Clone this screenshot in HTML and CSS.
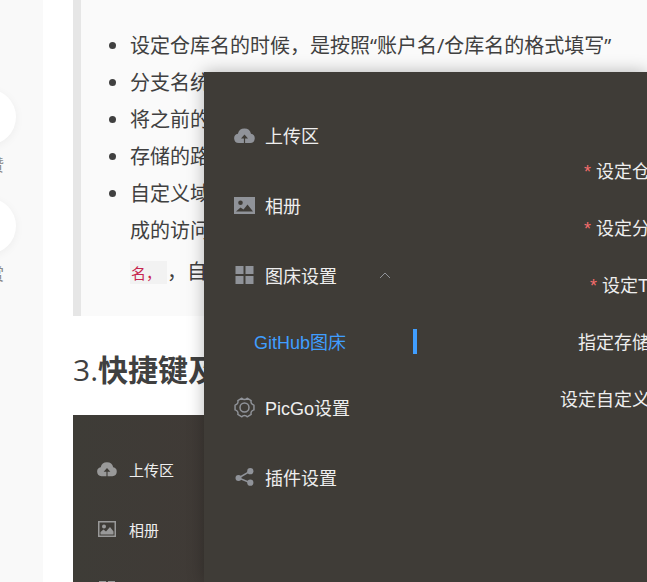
FILE: index.html
```html
<!DOCTYPE html>
<html lang="zh-CN">
<head>
<meta charset="utf-8">
<meta name="viewport" content="width=device-width, initial-scale=1">
<title>PicGo 图床设置</title>
<link rel="stylesheet" href="styles.css">
</head>
<body>
<svg class="sprite" aria-hidden="true">
  <symbol id="cloud" viewBox="0 0 21 16">
    <path fill="currentColor" fill-rule="evenodd" d="M4.7 15.5A4.7 4.7 0 0 1 3.9 6.2 6.7 6.7 0 0 1 17 6.200 4.700 4.700 0 0 1 16.200 15.500H11.100V11H14L10.500 7 7 11H9.900V15.500Z"/>
  </symbol>
  <symbol id="photo" viewBox="0 0 21 17">
    <path fill="currentColor" fill-rule="evenodd" d="M0 0H21V17H0ZM2 14.500H19L13.500 7.500 9.500 12.500 6.500 10.500ZM6.500 3.500A2.300 2.300 0 1 0 6.500 8.100 2.300 2.300 0 1 0 6.500 3.500Z"/>
  </symbol>
  <symbol id="photo-frame" viewBox="0 0 18 16">
    <path fill="currentColor" fill-rule="evenodd" d="M0 0H18V16H0ZM1.500 1.500V14.500H16.500V1.500Z"/>
    <path fill="currentColor" d="M2.500 13.500V11L5.500 8.500 8 10.500 12 6 15.500 10.500V13.500Z"/>
    <circle cx="6" cy="5.500" r="2" fill="currentColor"/>
  </symbol>
  <symbol id="grid" viewBox="0 0 18 18">
    <path fill="currentColor" d="M0 0H8V8H0ZM10 0H18V8H10ZM0 10H8V18H0ZM10 10H18V18H10Z"/>
  </symbol>
  <symbol id="gear" viewBox="0 0 22 22">
    <path fill="none" stroke="currentColor" stroke-width="1.500" stroke-linejoin="round" d="M8.200 1.300C9.500 3.100 12.500 3.100 13.800 1.300L18 3.700C17.200 5.900 18.500 8 20.900 8.500V13.500C18.500 14 17.200 16.100 18 18.300L13.800 20.700C12.500 18.900 9.500 18.900 8.200 20.700L4 18.300C4.800 16.100 3.500 14 1.100 13.500V8.500C3.500 8 4.800 5.900 4 3.700Z"/>
    <circle cx="11" cy="11" r="4.700" fill="none" stroke="currentColor" stroke-width="1.600"/>
  </symbol>
  <symbol id="share" viewBox="0 0 18 18">
    <path fill="none" stroke="currentColor" stroke-width="1.500" d="M14.800 3.200 3 10 14.800 14.800"/>
    <circle cx="3" cy="10" r="3" fill="currentColor"/>
    <circle cx="14.800" cy="3.200" r="3.100" fill="currentColor"/>
    <circle cx="14.800" cy="14.700" r="3.100" fill="currentColor"/>
  </symbol>
</svg>

<div class="page">
  <aside class="rail">
    <div class="action"><button class="circle" type="button" aria-label="点赞"></button><span>点赞</span></div>
    <div class="action"><button class="circle" type="button" aria-label="赞赏"></button><span>赞赏</span></div>
  </aside>
  <main class="article">
    <blockquote class="quote">
      <ul>
        <li>设定仓库名的时候，是按照“账户名/仓库名的格式填写”</li>
        <li>分支名统一</li>
        <li>将之前的</li>
        <li>存储的路径</li>
        <li>自定义域名<br>成的访问<br><span class="last"><code>名，</code>，自定</span></li>
      </ul>
    </blockquote>
    <h2><span class="number">3.</span>快捷键及</h2>
    <div class="shot">
      <div class="shot-row"><svg class="shot-icon"><use href="#cloud"/></svg>上传区</div>
      <div class="shot-row"><svg class="shot-icon"><use href="#photo-frame"/></svg>相册</div>
      <div class="shot-row"><svg class="shot-icon"><use href="#grid"/></svg>图床设置</div>
    </div>
  </main>
</div>

<section class="window">
  <nav class="menu">
    <a class="item" href="#upload"><svg class="icon wide"><use href="#cloud"/></svg>上传区</a>
    <a class="item" href="#gallery"><svg class="icon wide"><use href="#photo"/></svg>相册</a>
    <button class="item" type="button" aria-expanded="true"><svg class="icon"><use href="#grid"/></svg>图床设置<svg class="chevron" viewBox="0 0 12 7"><path d="M1 6 6 1 11 6"/></svg></button>
    <a class="item sub" href="#github">GitHub图床</a>
    <a class="item" href="#settings"><svg class="icon wide"><use href="#gear"/></svg>PicGo设置</a>
    <a class="item" href="#plugins"><svg class="icon"><use href="#share"/></svg>插件设置</a>
  </nav>
  <div class="fields">
    <div class="field required">设定仓库名</div>
    <div class="field required">设定分支名</div>
    <div class="field required">设定Token</div>
    <div class="field">指定存储路径</div>
    <div class="field">设定自定义域名</div>
  </div>
</section>
</body>
</html>
```
FILE: styles.css
```css
* {
  box-sizing: border-box;
}

body {
  margin: 0;
  height: 100vh;
  overflow: hidden;
  background: #fff;
  color: #404040;
  font-family: "Open Sans", "Noto Sans CJK SC", sans-serif;
}

.sprite {
  display: none;
}

.page {
  display: flex;
  height: 100%;
  overflow: hidden;
}

.rail {
  display: flex;
  flex: none;
  flex-direction: column;
  align-items: flex-end;
  gap: 21px;
  width: 43px;
  padding: 89px 27px 0 0;
  background: #f9f9f9;
}

.action {
  display: flex;
  flex-direction: column;
  align-items: center;
  gap: 8px;
  color: #8a8a8a;
  font-size: 16px;
  line-height: 24px;
  white-space: nowrap;
}

.circle {
  width: 56px;
  height: 56px;
  padding: 0;
  border: 0;
  border-radius: 50%;
  background: #fff;
  box-shadow: 0 2px 10px rgba(0, 0, 0, 0.05);
}

.article {
  flex: 1;
  min-width: 0;
  padding-left: 30px;
}

.quote {
  margin: 0;
  padding: 27px 0 26px 19px;
  border-left: 8px solid #e6e6e6;
  background: #fafafa;
  font-size: 20px;
  line-height: 37px;
  white-space: nowrap;
}

.quote ul {
  margin: 0;
  padding-left: 30px;
}

.last {
  display: inline-block;
  padding-top: 4px;
}

code {
  display: inline-block;
  padding: 0 6px 0 1px;
  background: #f2f2f2;
  color: #c7254e;
  font-family: "Noto Sans CJK SC", sans-serif;
  font-size: 15px;
  line-height: 23px;
}

h2 {
  margin: 32px 0 23px;
  font-size: 30px;
  font-weight: 700;
  line-height: 44px;
  white-space: nowrap;
}

.number {
  font-weight: 400;
}

.shot {
  padding: 24px 24px 0;
  background: linear-gradient(90deg, #3e3c37, #403a36 160px);
}

.shot-row {
  display: flex;
  align-items: center;
  gap: 12px;
  height: 60px;
  color: #eee;
  font-size: 15px;
}

.shot-icon {
  width: 20px;
  height: 16px;
  color: #999;
}

.window {
  position: absolute;
  top: 72px;
  right: 0;
  bottom: 0;
  left: 204px;
  display: flex;
  overflow: hidden;
  background: #3f3c37;
  color: #eee;
  font-family: "Liberation Sans", "Noto Sans CJK SC", sans-serif;
  font-size: 18px;
  white-space: nowrap;
  box-shadow: 0 0 16px rgba(0, 0, 0, 0.28);
}

.menu {
  flex: none;
  width: 213px;
  padding-top: 28px;
}

.item {
  display: flex;
  align-items: center;
  gap: 10px;
  width: 100%;
  height: 70px;
  padding: 0 26px 0 30px;
  border: 0;
  background: none;
  color: inherit;
  font: inherit;
  text-decoration: none;
}

.icon {
  width: 21px;
  height: 18px;
  color: #909399;
}

.wide {
  height: 21px;
}

.chevron {
  width: 12px;
  height: 7px;
  margin-left: auto;
  fill: none;
  stroke: #909399;
}

.sub {
  justify-content: space-between;
  height: 62px;
  padding: 0 0 0 50px;
  color: #409eff;
}

.sub::after {
  width: 4px;
  height: 25px;
  background: #409eff;
  content: "";
}

.fields {
  flex: none;
  width: 269px;
  padding-top: 72px;
}

.field {
  height: 57px;
  line-height: 57px;
  text-align: right;
}

.required::before {
  margin-right: 5px;
  color: #f56c6c;
  content: "*";
}
```
